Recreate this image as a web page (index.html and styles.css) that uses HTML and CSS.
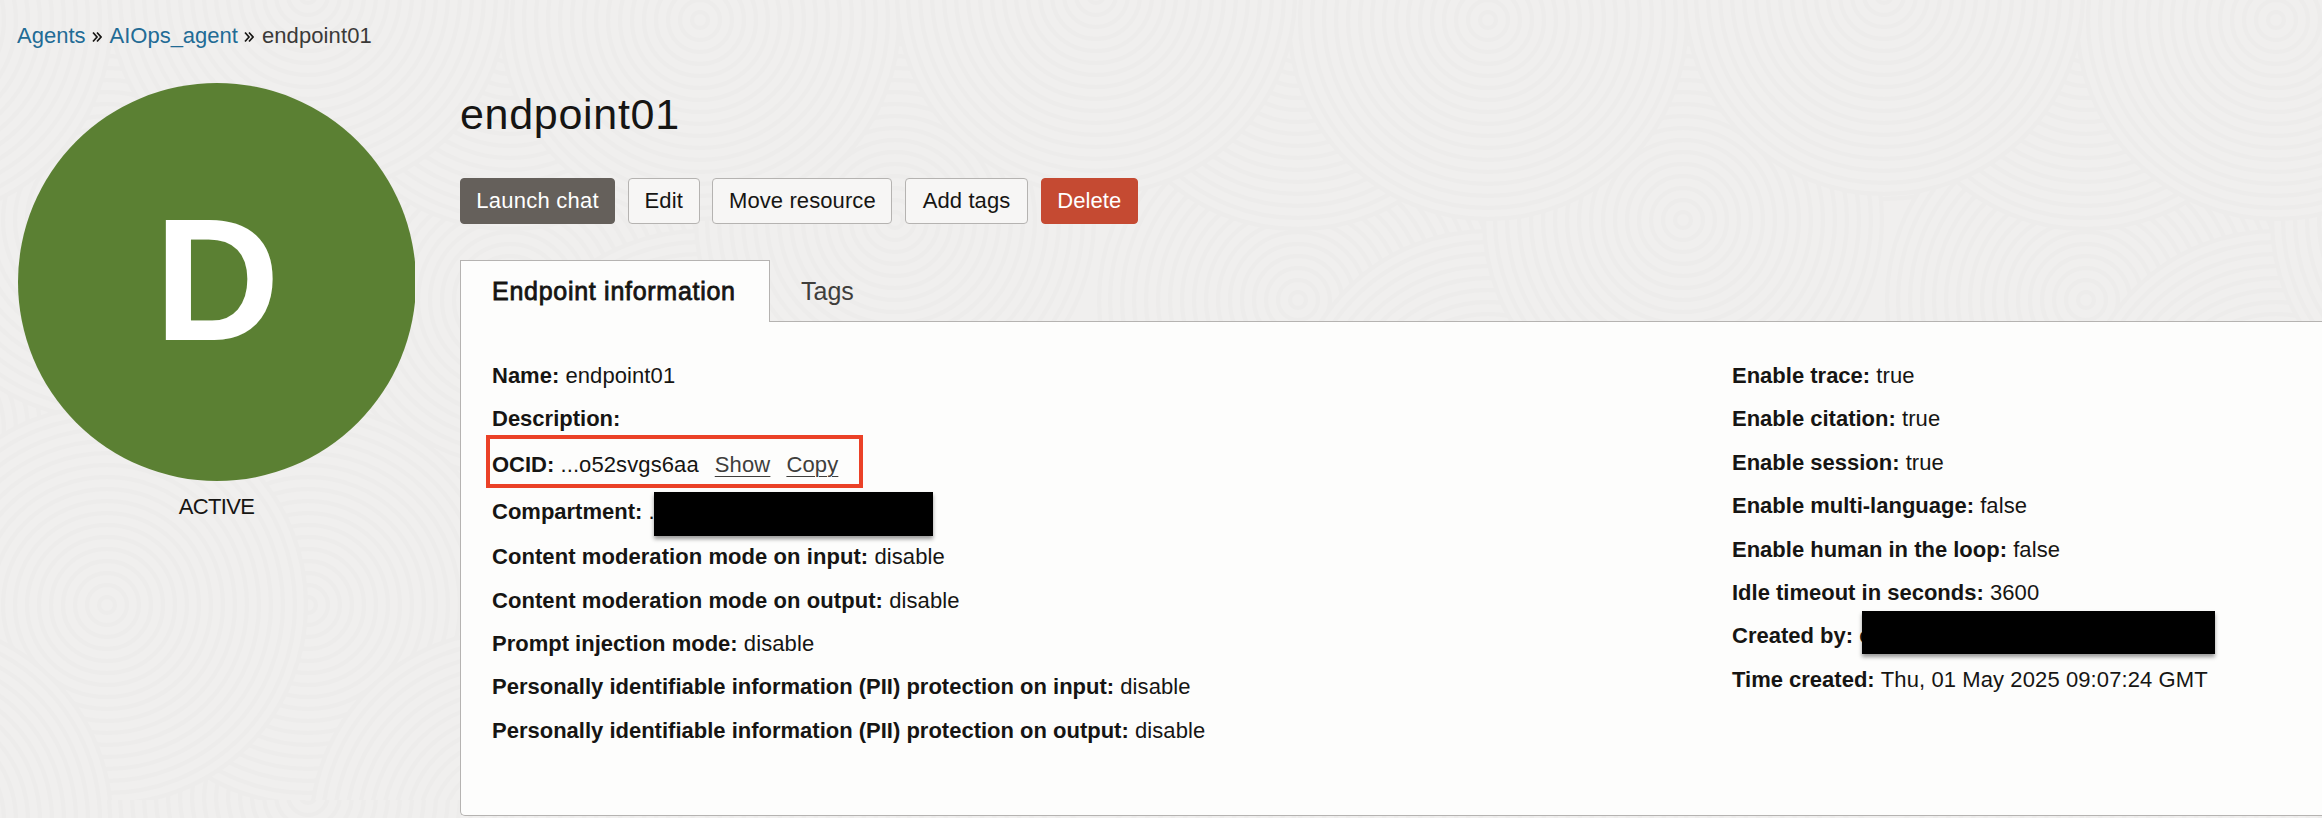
FILE: index.html
```html
<!DOCTYPE html>
<html lang="en">
<head>
<meta charset="utf-8">
<title>endpoint01</title>
<link rel="stylesheet" href="styles.css">
</head>
<body>
<svg class="texture" width="2322" height="818" aria-hidden="true">
  <defs>
    <g id="disc">
      <circle r="200" fill="#f0efee"/>
      <g fill="none" stroke="#edeceb" stroke-width="4">
        <circle r="8"/><circle r="20"/><circle r="32"/><circle r="44"/><circle r="56"/><circle r="68"/><circle r="80"/><circle r="92"/><circle r="104"/><circle r="116"/><circle r="128"/><circle r="140"/><circle r="152"/><circle r="164"/><circle r="176"/><circle r="188"/><circle r="199"/>
      </g>
    </g>
    <pattern id="swirl" width="788" height="800" patternUnits="userSpaceOnUse">
      <rect width="788" height="800" fill="#f0efee"/>
      <use href="#disc" x="308" y="0"/>
      <use href="#disc" x="308" y="800"/>
      <use href="#disc" x="510" y="300"/>
      <use href="#disc" x="700" y="430"/>
      <use href="#disc" x="-88" y="430"/>
      <use href="#disc" x="107" y="220"/>
      <use href="#disc" x="895" y="220"/>
      <use href="#disc" x="308" y="605"/>
      <use href="#disc" x="510" y="30"/>
      <use href="#disc" x="510" y="830"/>
      <use href="#disc" x="107" y="605"/>
      <use href="#disc" x="895" y="605"/>
      <use href="#disc" x="700" y="20"/>
      <use href="#disc" x="-88" y="20"/>
      <use href="#disc" x="700" y="820"/>
      <use href="#disc" x="-88" y="820"/>
      <use href="#disc" x="308" y="-5"/>
    </pattern>
  </defs>
  <rect width="2322" height="818" fill="url(#swirl)"/>
</svg>
<div class="page">
  <nav class="breadcrumb">
    <a class="crumb-agents">Agents</a>
    <svg class="chev" width="10" height="12" viewBox="0 0 10 12"><path d="M1 1.5 5 6 1 10.5M5 1.5 9 6 5 10.5"/></svg>
    <a class="crumb-agent">AIOps_agent</a>
    <svg class="chev" width="10" height="12" viewBox="0 0 10 12"><path d="M1 1.5 5 6 1 10.5M5 1.5 9 6 5 10.5"/></svg>
    <span class="crumb-current">endpoint01</span>
  </nav>
  <div class="columns">
    <aside class="status">
      <div class="badge-clip"><div class="badge">D</div></div>
      <div class="state">ACTIVE</div>
    </aside>
    <main class="main">
      <h1 class="title">endpoint01</h1>
      <div class="actions">
        <button class="btn primary w-launch">Launch chat</button>
        <button class="btn w-edit">Edit</button>
        <button class="btn w-move">Move resource</button>
        <button class="btn w-tags">Add tags</button>
        <button class="btn danger w-delete">Delete</button>
      </div>
      <div class="tabs">
        <div class="tab active"><span>Endpoint information</span></div>
        <div class="tab">Tags</div>
      </div>
      <section class="panel">
        <div class="list left">
          <div class="row"><b>Name:</b> <span>endpoint01</span></div>
          <div class="row"><b>Description:</b></div>
          <div class="row ocid"><b>OCID:</b> <span>...o52svgs6aa</span><a class="link show">Show</a><a class="link copy">Copy</a><i class="highlight"></i></div>
          <div class="row compartment"><b>Compartment:</b> <span>.</span><i class="redact redact-a"></i></div>
          <div class="row moderation"><b>Content moderation mode on input:</b> <span>disable</span></div>
          <div class="row moderation"><b>Content moderation mode on output:</b> <span>disable</span></div>
          <div class="row"><b>Prompt injection mode:</b> <span>disable</span></div>
          <div class="row"><b>Personally identifiable information (PII) protection on input:</b> <span>disable</span></div>
          <div class="row"><b>Personally identifiable information (PII) protection on output:</b> <span>disable</span></div>
        </div>
        <div class="list right">
          <div class="row"><b>Enable trace:</b> <span>true</span></div>
          <div class="row"><b>Enable citation:</b> <span>true</span></div>
          <div class="row"><b>Enable session:</b> <span>true</span></div>
          <div class="row"><b>Enable multi-language:</b> <span>false</span></div>
          <div class="row"><b>Enable human in the loop:</b> <span>false</span></div>
          <div class="row"><b>Idle timeout in seconds:</b> <span>3600</span></div>
          <div class="row"><b>Created by:</b> <b>o</b><i class="redact redact-b"></i></div>
          <div class="row time"><b>Time created:</b> <span>Thu, 01 May 2025 09:07:24 GMT</span></div>
        </div>
      </section>
    </main>
  </div>
</div>
</body>
</html>
```
FILE: styles.css
```css
* { box-sizing: border-box; }
body {
  margin: 0;
  width: 2322px;
  height: 818px;
  overflow: hidden;
  background: #f0efee;
  color: #161513;
  font-family: "Liberation Sans", Arial, sans-serif;
  font-size: 22px;
}
.texture { position: absolute; left: 0; top: 0; z-index: -1; }
.page { padding-left: 18px; height: 818px; }
.breadcrumb { height: 83px; padding-top: 23px; margin-left: -1px; display: flex; align-items: flex-start; line-height: 26px; }
.breadcrumb a { color: #226b95; }
.crumb-current { color: #3b3a38; letter-spacing: 0.1px; }
.chev { margin: 8px 8px 0 6px; fill: none; stroke: #161513; stroke-width: 1.7; }
.columns { display: flex; }
.status { width: 442px; flex: none; }
.badge-clip { width: 397px; height: 398px; overflow: hidden; }
.badge {
  width: 398px; height: 398px; border-radius: 50%;
  background: #5b8033; color: #fff;
  font-size: 174px; font-weight: 700; line-height: 394px; text-align: center;
}
.state { width: 397px; text-align: center; line-height: 26px; margin-top: 13px; letter-spacing: -0.7px; }
.main { flex: 1; }
.title { margin: 8px 0 0; height: 87px; line-height: 47px; font-size: 43px; font-weight: 400; letter-spacing: 0.7px; }
.actions { display: flex; gap: 12.7px; height: 82px; }
.btn {
  height: 46px; padding: 0; border: 1px solid #b5b3b1; border-radius: 4px;
  background: #f7f6f5; color: #161513; font: 22px "Liberation Sans", Arial, sans-serif; letter-spacing: 0.1px;
}
.primary { background: #65605b; border-color: #65605b; color: #fff; }
.danger { background: #c54a32; border-color: #c54a32; color: #fff; }
.w-launch { width: 155px; letter-spacing: 0.25px; }
.w-edit { width: 72px; }
.w-move { width: 180px; }
.w-tags { width: 123px; }
.w-delete { width: 97px; }
.tabs { display: flex; height: 61px; position: relative; z-index: 1; }
.tab { padding: 0 31px; font-size: 25px; line-height: 62px; color: #3f3e3c; }
.tab.active {
  width: 310px; height: 62px; padding: 0 0 0 31px; line-height: 61px; color: #161513; white-space: nowrap;
  background: #fdfdfc; border: 1px solid #b5b3b1; border-bottom: 0;
  -webkit-text-stroke: 0.8px #161513; letter-spacing: 0.72px;
}
.panel {
  display: flex; height: 495px; padding: 32px 0 0 31px;
  background: #fdfdfc; border: 1px solid #b5b3b1; border-right: 0; border-bottom-left-radius: 5px;
}
.left { width: 1240px; }
.row { position: relative; height: 43.4px; line-height: 43px; white-space: nowrap; }
.row span { letter-spacing: 0.1px; }
.moderation b { letter-spacing: 0.07px; }
.ocid { height: 48px; line-height: 48px; }
.compartment { height: 46.5px; line-height: 46px; }
.link { color: #3f3e3c; text-decoration: underline; text-decoration-thickness: 1px; text-underline-offset: 4px; margin-left: 16px; letter-spacing: 0.15px; }
.highlight { position: absolute; left: -6px; top: -6px; width: 377px; height: 53px; border: 4px solid #eb4127; }
.redact { position: absolute; background: #000; box-shadow: 0 3px 4px rgba(0,0,0,.4); }
.redact-a { left: 162px; top: 3px; width: 279px; height: 44px; }
.redact-b { left: 130px; top: -3px; width: 353px; height: 43px; }
```
